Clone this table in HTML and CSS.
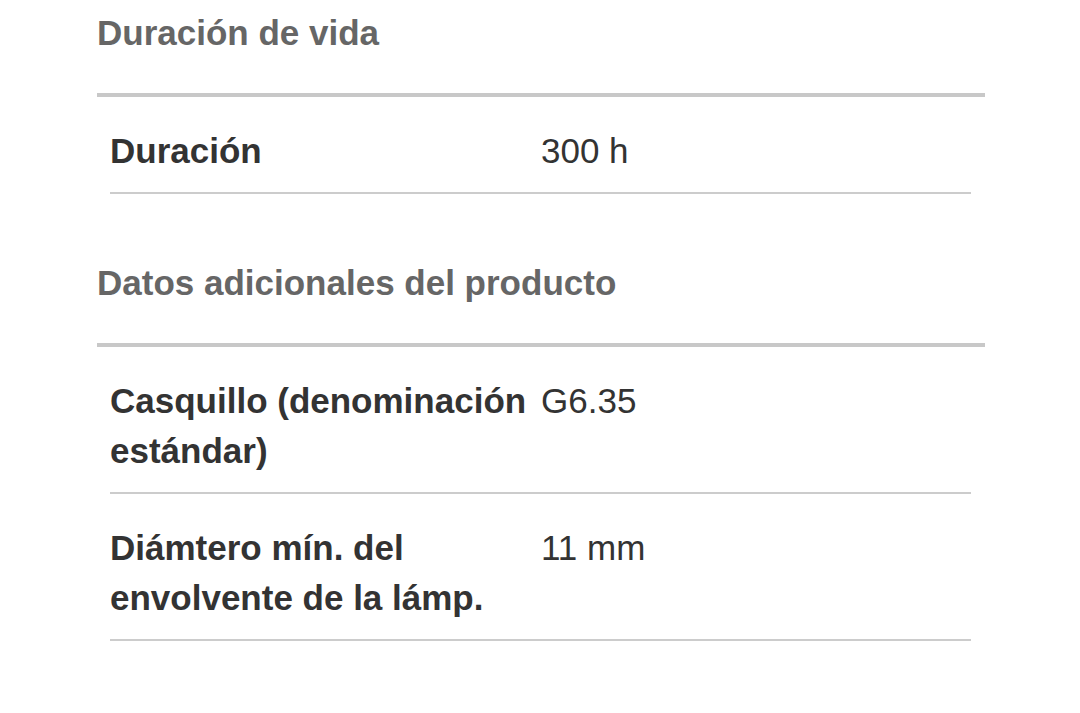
FILE: index.html
```html
<!DOCTYPE html>
<html lang="es">
<head>
<meta charset="utf-8">
<title>Datos técnicos</title>
<link rel="stylesheet" href="styles.css">
</head>
<body>
<main class="page">
  <section class="section">
    <h2 class="section-title">Duración de vida</h2>
    <div class="spec-list">
      <div class="spec-row">
        <div class="spec-label">Duración</div>
        <div class="spec-value">300 h</div>
      </div>
    </div>
  </section>
  <section class="section">
    <h2 class="section-title">Datos adicionales del producto</h2>
    <div class="spec-list">
      <div class="spec-row">
        <div class="spec-label">Casquillo (denominación estándar)</div>
        <div class="spec-value">G6.35</div>
      </div>
      <div class="spec-row">
        <div class="spec-label">Diámtero mín. del envolvente de la lámp.</div>
        <div class="spec-value">11 mm</div>
      </div>
    </div>
  </section>
</main>
</body>
</html>
```
FILE: styles.css
```css
html, body {
  margin: 0;
  padding: 0;
  background: #ffffff;
}

body {
  font-family: "Liberation Sans", Arial, Helvetica, sans-serif;
  font-size: 35px;
  line-height: 50px;
  color: #333333;
}

.page {
  padding: 8px 95px 0 97px;
}

.section + .section {
  margin-top: 64px;
}

.section-title {
  margin: 0;
  font-size: 35px;
  line-height: 50px;
  font-weight: 700;
  color: #666666;
  padding-bottom: 35px;
  border-bottom: 4px solid #c8c8c8;
}

.spec-list {
  margin: 0 14px 0 13px;
}

.spec-row {
  display: grid;
  grid-template-columns: 431px 1fr;
  padding: 29px 0 16px;
  border-bottom: 2px solid #cccccc;
}

.spec-label {
  font-weight: 700;
  color: #333333;
  padding-right: 6px;
}

.spec-value {
  font-weight: 400;
  color: #333333;
}
```
